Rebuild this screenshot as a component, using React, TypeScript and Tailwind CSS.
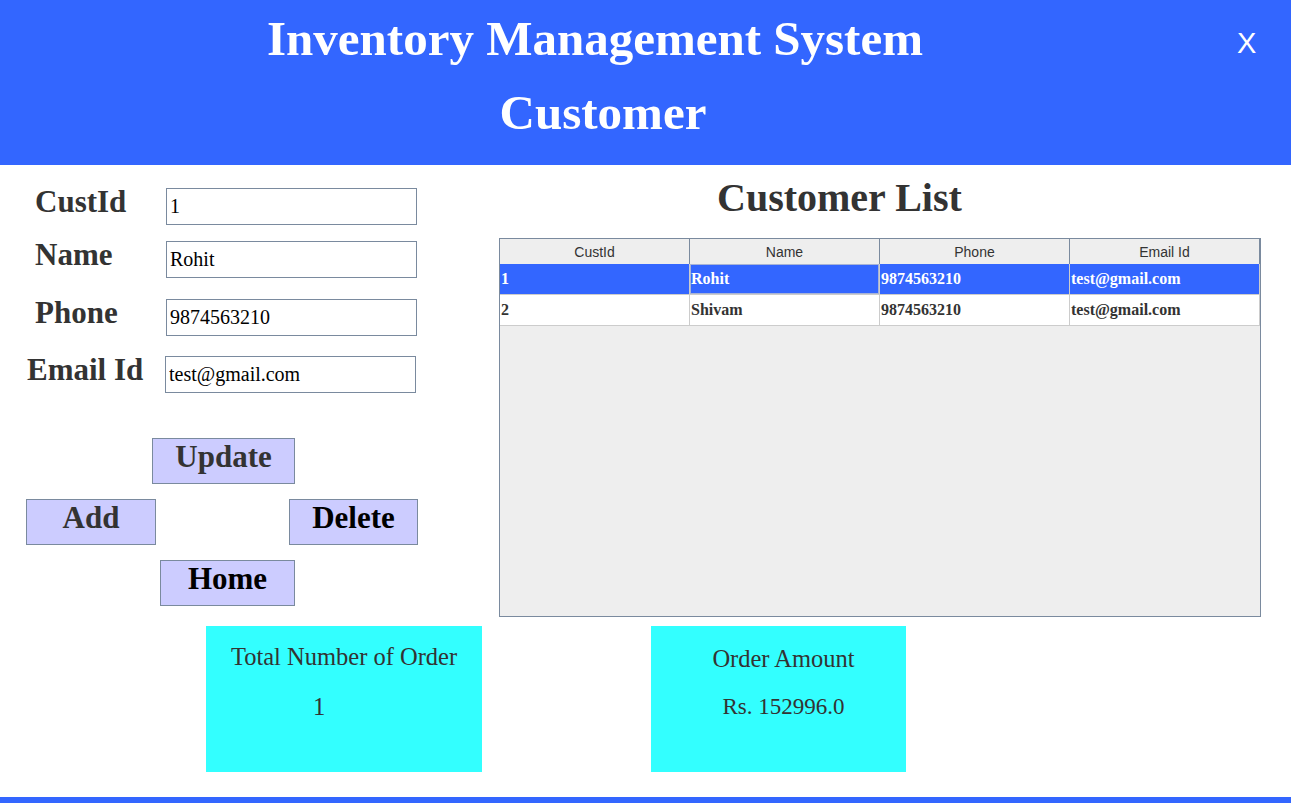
import React from 'react'

const customers = [
  { id: '1', name: 'Rohit', phone: '9874563210', email: 'test@gmail.com' },
  { id: '2', name: 'Shivam', phone: '9874563210', email: 'test@gmail.com' }
]

const columns = ['CustId', 'Name', 'Phone', 'Email Id']

export default function App() {
  return (
    <div className="w-[1291px] h-[803px] bg-white overflow-hidden font-['Liberation_Serif','Times_New_Roman',serif]">
      {/* Header */}
      <div className="h-[165px] bg-[#3366ff] flex">
        <div className="w-[1190px] pt-[14px] text-center text-white font-bold">
          <div className="text-[49px] leading-none">Inventory Management System</div>
          <div className="mt-[25px] pl-[16px] text-[49px] leading-none">Customer</div>
        </div>
        <div className="ml-[47px] mt-[29px] text-[29px] leading-none text-white font-['Liberation_Sans',Arial,sans-serif]">
          X
        </div>
      </div>

      {/* Main */}
      <div className="h-[461px] flex">
        {/* Form */}
        <div className="w-[499px] pt-[23px] flex flex-col">
          <div className="flex h-[37px]">
            <div className="w-[166px] pl-[35px] -mt-[2px] text-[31px] font-bold leading-none text-[#333]">CustId</div>
            <input readOnly value="1" className="w-[251px] h-[37px] border border-[#7a8a9e] px-[3px] text-[20px] text-black bg-white outline-none font-['Liberation_Serif','Times_New_Roman',serif]" />
          </div>
          <div className="flex h-[37px] mt-[16px]">
            <div className="w-[166px] pl-[35px] -mt-[2px] text-[31px] font-bold leading-none text-[#333]">Name</div>
            <input readOnly value="Rohit" className="w-[251px] h-[37px] border border-[#7a8a9e] px-[3px] text-[20px] text-black bg-white outline-none font-['Liberation_Serif','Times_New_Roman',serif]" />
          </div>
          <div className="flex h-[37px] mt-[21px]">
            <div className="w-[166px] pl-[35px] -mt-[2px] text-[31px] font-bold leading-none text-[#333]">Phone</div>
            <input readOnly value="9874563210" className="w-[251px] h-[37px] border border-[#7a8a9e] px-[3px] text-[20px] text-black bg-white outline-none font-['Liberation_Serif','Times_New_Roman',serif]" />
          </div>
          <div className="flex h-[37px] mt-[20px]">
            <div className="w-[165px] pl-[27px] -mt-[2px] text-[31px] font-bold leading-none text-[#333]">Email Id</div>
            <input readOnly value="test@gmail.com" className="w-[251px] h-[37px] border border-[#7a8a9e] px-[3px] text-[20px] text-black bg-white outline-none font-['Liberation_Serif','Times_New_Roman',serif]" />
          </div>

          {/* Buttons */}
          <button className="mt-[45px] ml-[152px] w-[143px] h-[46px] border border-[#7a8a9e] bg-[#ccccff] flex items-center justify-center pb-[10px] text-[31px] font-bold leading-none text-[#333]">
            Update
          </button>
          <div className="mt-[15px] flex">
            <button className="ml-[26px] w-[130px] h-[46px] border border-[#7a8a9e] bg-[#ccccff] flex items-center justify-center pb-[10px] text-[31px] font-bold leading-none text-[#333]">
              Add
            </button>
            <button className="ml-[133px] w-[129px] h-[46px] border border-[#7a8a9e] bg-[#ccccff] flex items-center justify-center pb-[10px] text-[31px] font-bold leading-none text-black">
              Delete
            </button>
          </div>
          <button className="mt-[15px] ml-[160px] w-[135px] h-[46px] border border-[#7a8a9e] bg-[#ccccff] flex items-center justify-center pb-[10px] text-[31px] font-bold leading-none text-black">
            Home
          </button>
        </div>

        {/* Customer list */}
        <div className="w-[762px] pt-[13px] flex flex-col">
          <div className="pl-[218px] text-[40px] font-bold leading-none text-[#333]">Customer List</div>
          <div className="mt-[20px] w-[762px] h-[379px] border border-[#7a8a9e] bg-[#eeeeee]">
            <div className="flex h-[25px] bg-[#eeeeee]">
              {columns.map((c) => (
                <div
                  key={c}
                  className="w-[190px] border-r border-[#7a8a9e] flex items-center justify-center text-[14px] leading-none text-[#333] font-['Liberation_Sans',Arial,sans-serif]"
                >
                  {c}
                </div>
              ))}
            </div>
            {customers.map((row, i) => {
              const selected = i === 0
              return (
                <div
                  key={row.id}
                  className={
                    selected
                      ? 'flex h-[31px] bg-[#3366ff] border-b border-[#cccccc] text-white'
                      : 'flex h-[31px] bg-white border-b border-[#cccccc] text-[#333]'
                  }
                >
                  {[row.id, row.name, row.phone, row.email].map((v, j) => (
                    <div
                      key={j}
                      className={
                        selected && j === 1
                          ? 'w-[190px] border-r border-[#cccccc] flex items-center pl-[1px] text-[16px] font-bold leading-none shadow-[inset_0_0_0_1px_#a7b3d6]'
                          : 'w-[190px] border-r border-[#cccccc] flex items-center pl-[1px] text-[16px] font-bold leading-none'
                      }
                    >
                      {v}
                    </div>
                  ))}
                </div>
              )
            })}
          </div>
        </div>
      </div>

      {/* Summary cards */}
      <div className="h-[146px] flex">
        <div className="ml-[206px] w-[276px] h-[146px] bg-[#33ffff] pt-[19px] text-[#333]">
          <div className="text-center text-[24.5px] leading-none">Total Number of Order</div>
          <div className="mt-[25px] ml-[107px] text-[24.5px] leading-none">1</div>
        </div>
        <div className="ml-[169px] w-[255px] h-[146px] bg-[#33ffff] pt-[21px] pl-[10px] text-[#333]">
          <div className="text-center text-[24.5px] leading-none">Order Amount</div>
          <div className="mt-[23px] text-center text-[23px] leading-none">Rs. 152996.0</div>
        </div>
      </div>

      {/* Footer bar */}
      <div className="mt-[25px] h-[6px] bg-[#3366ff]" />
    </div>
  )
}
